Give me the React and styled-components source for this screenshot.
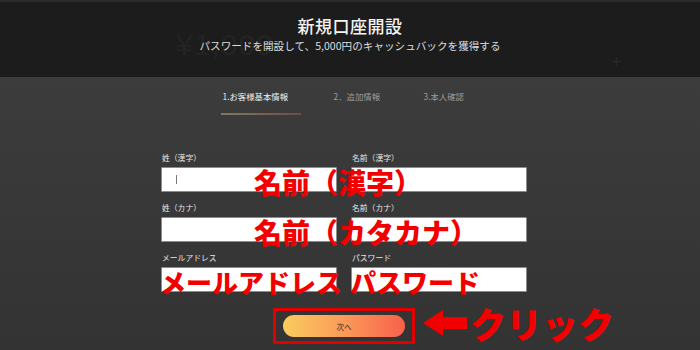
import React from "react";
import styled, { createGlobalStyle } from "styled-components";

const GlobalStyle = createGlobalStyle`
  html, body { margin: 0; padding: 0; }
  body {
    width: 700px;
    height: 350px;
    overflow: hidden;
    background: #363636;
    font-family: "Noto Sans CJK JP", "Noto Sans", sans-serif;
  }
`;

const Page = styled.div`
  width: 700px;
  height: 350px;
  display: flex;
  flex-direction: column;
`;

// faint "¥1,000" and "+" decoration sit in the header background
const Header = styled.header`
  position: relative;
  height: 77px;
  flex-shrink: 0;
  background: #1c1c1c;
  border-top: 2px solid #2a2a2a;
  box-sizing: border-box;
  display: flex;
  flex-direction: column;
  align-items: center;
  overflow: hidden;

  &::before {
    content: "¥1,000";
    position: absolute;
    left: 176px;
    top: 26px;
    font-family: "Liberation Sans", sans-serif;
    font-size: 30px;
    color: rgba(255, 255, 255, 0.05);
    letter-spacing: 1px;
  }

  &::after {
    content: "+";
    position: absolute;
    left: 611px;
    top: 50px;
    font-family: "Liberation Sans", sans-serif;
    font-size: 18px;
    line-height: 20px;
    color: rgba(255, 255, 255, 0.07);
  }
`;

const Title = styled.h1`
  position: relative;
  margin: 13px 0 0;
  font-size: 17px;
  line-height: 22px;
  font-weight: 500;
  color: #f4f4f4;
  letter-spacing: 0.5px;
`;

const Subtitle = styled.p`
  position: relative;
  margin: 2px 0 0;
  font-size: 10.6px;
  line-height: 14px;
  color: #dcdcdc;
`;

const Body = styled.main`
  flex: 1;
  background: linear-gradient(#3c3c3c, #333333);
  display: flex;
  flex-direction: column;
  align-items: center;
`;

const Tabs = styled.nav`
  margin-top: 14px;
  width: 260px;
  margin-left: 1px;
  display: flex;
`;

const Tab = styled.div`
  width: ${p => p.$w}px;
  display: flex;
  flex-direction: column;
  align-items: flex-start;
`;

const TabLabel = styled.span`
  font-size: 8.4px;
  line-height: 11px;
  padding-left: 2px;
  color: ${p => (p.$active ? "#f0f0f0" : "#9a9a9a")};
  white-space: nowrap;
`;

const TabLine = styled.div`
  margin-top: 11px;
  width: 80px;
  height: 2px;
  background: ${p => (p.$active ? "linear-gradient(90deg, #7f7c58, #714a4a)" : "transparent")};
`;

const Form = styled.form`
  margin-top: 38px;
  margin-left: -12px;
  width: 366px;
  display: grid;
  grid-template-columns: 176px 176px;
  column-gap: 14px;
  row-gap: 11px;
`;

const Row = styled.div`
  grid-column: 1 / 3;
  display: grid;
  grid-template-columns: 176px 176px;
  column-gap: 14px;
  position: relative;
`;

const Field = styled.label`
  display: flex;
  flex-direction: column;
`;

const FieldLabel = styled.span`
  font-size: 7.8px;
  line-height: 10px;
  color: #e6e6e6;
  margin-bottom: 4px;
  padding-left: 1px;
`;

const Input = styled.div`
  height: 25px;
  box-sizing: border-box;
  background: #ffffff;
  border: 1px solid #8c8c8c;
  border-radius: 1px;
  display: flex;
  align-items: center;
  padding-left: 14px;
`;

const Caret = styled.span`
  width: 1px;
  height: 9px;
  background: #777;
`;

const Note = styled.span`
  position: absolute;
  left: ${p => p.$left}px;
  top: 15px;
  font-size: ${p => p.$size || 27}px;
  line-height: 28px;
  font-weight: 900;
  color: #f20000;
  white-space: nowrap;
  pointer-events: none;
`;

const ButtonArea = styled.div`
  margin-top: 16px;
  margin-left: -12px;
  position: relative;
`;

const Frame = styled.div`
  border: 3px solid #e00000;
  padding: 4px 7px;
  display: flex;
`;

const NextButton = styled.button`
  width: 122px;
  height: 22px;
  border: none;
  border-radius: 11px;
  background: linear-gradient(90deg, #f9cd5d, #fb9a5a 50%, #f8604a);
  font-family: inherit;
  font-size: 7.5px;
  color: #3a2a20;
  cursor: pointer;
  padding: 0;
`;

const Callout = styled.div`
  position: absolute;
  left: 150px;
  top: -8px;
  display: flex;
  align-items: center;
  gap: 2px;
  white-space: nowrap;
`;

const CalloutText = styled.span`
  font-size: 36px;
  line-height: 46px;
  font-weight: 900;
  color: #f20000;
`;

const Arrow = () => (
  <svg width="45" height="26" viewBox="0 0 45 26">
    <polygon points="0,13 20,0 20,7 44,7 44,19 20,19 20,26" fill="#f20000" />
  </svg>
);

export default function App() {
  return (
    <>
      <GlobalStyle />
      <Page>
        <Header>
          <Title>新規口座開設</Title>
          <Subtitle>パスワードを開設して、5,000円のキャッシュバックを獲得する</Subtitle>
        </Header>
        <Body>
          <Tabs>
            <Tab $w={111}>
              <TabLabel $active>1.お客様基本情報</TabLabel>
              <TabLine $active />
            </Tab>
            <Tab $w={90}>
              <TabLabel>2．追加情報</TabLabel>
            </Tab>
            <Tab $w={59}>
              <TabLabel>3.本人確認</TabLabel>
            </Tab>
          </Tabs>
          <Form>
            <Row>
              <Field>
                <FieldLabel>姓（漢字）</FieldLabel>
                <Input><Caret /></Input>
              </Field>
              <Field>
                <FieldLabel>名前（漢字）</FieldLabel>
                <Input />
              </Field>
              <Note $left={93} $size={28}>名前（漢字）</Note>
            </Row>
            <Row>
              <Field>
                <FieldLabel>姓（カナ）</FieldLabel>
                <Input />
              </Field>
              <Field>
                <FieldLabel>名前（カナ）</FieldLabel>
                <Input />
              </Field>
              <Note $left={93} $size={28}>名前（カタカナ）</Note>
            </Row>
            <Row>
              <Field>
                <FieldLabel>メールアドレス</FieldLabel>
                <Input />
              </Field>
              <Field>
                <FieldLabel>パスワード</FieldLabel>
                <Input />
              </Field>
              <Note $left={-1} $size={26}>メールアドレス</Note>
              <Note $left={189} $size={26}>パスワード</Note>
            </Row>
          </Form>
          <ButtonArea>
            <Frame>
              <NextButton type="button">次へ</NextButton>
            </Frame>
            <Callout>
              <Arrow />
              <CalloutText>クリック</CalloutText>
            </Callout>
          </ButtonArea>
        </Body>
      </Page>
    </>
  );
}
